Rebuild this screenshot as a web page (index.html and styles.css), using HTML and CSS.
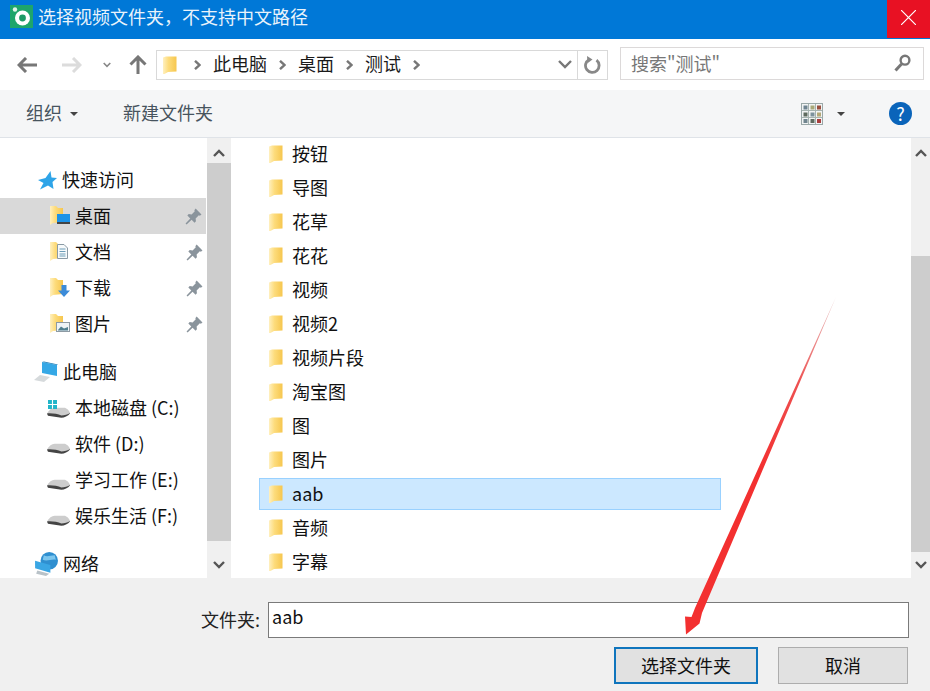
FILE: index.html
```html
<!DOCTYPE html>
<html lang="zh-CN">
<head>
<meta charset="utf-8">
<title>选择视频文件夹</title>
<link rel="stylesheet" href="styles.css">
</head>
<body>
<svg class="defs" width="0" height="0">
  <defs>
    <linearGradient id="fg" x1="0" y1="0" x2="1" y2="0">
      <stop offset="0" stop-color="#fff0c0"/>
      <stop offset=".4" stop-color="#fddc7c"/>
      <stop offset="1" stop-color="#f6c64e"/>
    </linearGradient>
    <linearGradient id="tail" gradientUnits="userSpaceOnUse" x1="836" y1="297" x2="760" y2="470">
      <stop offset="0" stop-color="#e8c8c8"/>
      <stop offset=".5" stop-color="#ee5050"/>
      <stop offset="1" stop-color="#f33030"/>
    </linearGradient>
    <symbol id="folder" viewBox="0 0 14 18">
      <path d="M0 1.500 3 .5H13.500V15.500L5 16 1.500 18H0Z" fill="url(#fg)"/>
    </symbol>
    <symbol id="sfolder" viewBox="0 0 14 20">
      <path d="M0 1H6L8 3H13V17L3 18 0 20Z" fill="url(#fg)"/>
    </symbol>
    <symbol id="pin" viewBox="0 0 16 16">
      <path d="M10 .5 15.500 6 14 7.200 13 6.800 10 9.800 10.300 12.500 9 13.800 6.200 11 1.500 15.500.5 14.500 5 9.800 2.200 7 3.500 5.700 6.200 6 9.200 3 8.800 2Z" fill="#8a949c"/>
    </symbol>
    <symbol id="drive" viewBox="0 0 24 11">
      <path d="M0 6.500C2 3 5 .5 8 .5H18C20 .5 23 3 24 6C22 8 18 10 15 10L1 8Z" fill="#cdcdcd"/>
      <path d="M0 6.500C5 6 11 7 15 8.500C18 8.500 22 7.500 24 6V6.500C22 9 18 11 15 11L1 9Z" fill="#444"/>
    </symbol>
  </defs>
</svg>

<header class="titlebar">
  <svg class="app-icon" viewBox="0 0 23 23"><rect width="23" height="23" fill="#1ea56b"/><circle cx="12.500" cy="13" r="7.500" fill="#fff"/><circle cx="12.500" cy="13" r="3.400" fill="#1d9a66"/><circle cx="5" cy="4.500" r="2.200" fill="#dff3e8"/></svg>
  <span class="title-text">选择视频文件夹，不支持中文路径</span>
  <button class="close" type="button"><svg viewBox="0 0 15 15" class="close-x"><path d="M0 0 15 15M15 0 0 15" stroke="#fff" stroke-width="1.200" fill="none"/></svg></button>
</header>

<nav class="navbar">
  <svg class="nav-back" viewBox="0 0 20 16"><path d="M20 8H2M9 1 2 8 9 15" fill="none" stroke="#777" stroke-width="3"/></svg>
  <svg class="nav-forward" viewBox="0 0 20 16"><path d="M0 8H18M11 1 18 8 11 15" fill="none" stroke="#dcdcdc" stroke-width="3"/></svg>
  <svg class="nav-recent" viewBox="0 0 8 6"><path d="M.7 1 4 4.300 7.300 1" fill="none" stroke="#888" stroke-width="1.600"/></svg>
  <svg class="nav-up" viewBox="0 0 18 19"><path d="M9 19V2M1.500 9.500 9 2 16.500 9.500" fill="none" stroke="#777" stroke-width="3"/></svg>
  <div class="address">
    <svg class="addr-folder"><use href="#folder"/></svg>
    <svg class="chev" viewBox="0 0 7 10"><path d="M1 .8 5.400 5 1 9.200" fill="none" stroke="#777" stroke-width="2.400"/></svg>
    <span class="crumb">此电脑</span>
    <svg class="chev" viewBox="0 0 7 10"><path d="M1 .8 5.400 5 1 9.200" fill="none" stroke="#777" stroke-width="2.400"/></svg>
    <span class="crumb">桌面</span>
    <svg class="chev" viewBox="0 0 7 10"><path d="M1 .8 5.400 5 1 9.200" fill="none" stroke="#777" stroke-width="2.400"/></svg>
    <span class="crumb">测试</span>
    <svg class="chev" viewBox="0 0 7 10"><path d="M1 .8 5.400 5 1 9.200" fill="none" stroke="#777" stroke-width="2.400"/></svg>
    <svg class="addr-down" viewBox="0 0 14 9"><path d="M1 1 7 7 13 1" fill="none" stroke="#777" stroke-width="2.400"/></svg>
    <div class="addr-refresh">
      <svg class="refresh" viewBox="0 0 17 18"><path d="M12.500 4.200A6.800 6.800 0 1 1 5 3.600" fill="none" stroke="#888" stroke-width="2.800"/><path d="M3 0 8.500 3.600 3.500 7.200Z" fill="#888"/></svg>
    </div>
  </div>
  <div class="search">
    <span class="search-text">搜索"测试"</span>
    <svg class="search-icon" viewBox="0 0 17 18"><circle cx="11" cy="6.200" r="4.400" fill="none" stroke="#777" stroke-width="2.400"/><path d="M7.500 10 1.500 16.500" stroke="#777" stroke-width="3" fill="none"/></svg>
  </div>
</nav>

<div class="toolbar">
  <span class="tool">组织</span>
  <span class="caret caret-org"></span>
  <span class="tool tool-new">新建文件夹</span>
  <svg class="view-icon" viewBox="0 0 22 22">
    <rect x=".5" y=".5" width="21" height="21" fill="#f2f4f4" stroke="#9aa8a8"/>
    <path d="M7.500 1V21M14.500 1V21M1 7.500H21M1 14.500H21" stroke="#a6b4b0"/>
    <rect x="2.500" y="2.500" width="4" height="4" fill="#6f8491"/><rect x="9.500" y="2.500" width="4" height="4" fill="#a8a878"/><rect x="16" y="2.500" width="4" height="4" fill="#99503f"/>
    <rect x="2.500" y="9.500" width="4" height="4" fill="#5e6a5e"/><rect x="9.500" y="9.500" width="4" height="4" fill="#7c919c"/><rect x="16" y="9.500" width="4" height="4" fill="#b4a878"/>
    <rect x="2.500" y="16" width="4" height="4" fill="#71858f"/><rect x="9.500" y="16" width="4" height="4" fill="#5e6a5e"/><rect x="16" y="16" width="4" height="4" fill="#a83e3e"/>
  </svg>
  <span class="caret caret-view"></span>
  <span class="help">?</span>
</div>

<main class="content">
  <aside class="sidebar">
    <div class="side-row side-top side-first">
      <svg class="star" viewBox="0 0 19 19"><path d="M12.500 0 13.500 6.500 19 7 14.500 11 15.500 18 10 14.500 2 18.500 5.500 12 0 9 7.500 7Z" fill="#2ea4e8"/></svg>
      <span class="label">快速访问</span>
    </div>
    <div class="side-row side-child selected">
      <span class="side-ico"><svg class="sf"><use href="#sfolder"/></svg><svg class="ov ov-desk" viewBox="0 0 13 10"><rect width="13" height="8" fill="#1c93e8"/><rect y="8" width="13" height="2" fill="#444"/></svg></span>
      <span class="label">桌面</span><svg class="pin"><use href="#pin"/></svg>
    </div>
    <div class="side-row side-child">
      <span class="side-ico"><svg class="sf"><use href="#sfolder"/></svg><svg class="ov ov-doc" viewBox="0 0 11 15"><path d="M.5.5H7L10.500 4V14.500H.5Z" fill="#f7fafb" stroke="#8a9aa5"/><path d="M2.500 5H8.500M2.500 7.500H8.500M2.500 10H8.500M2.500 12H8.500" stroke="#6d9db8"/></svg></span>
      <span class="label">文档</span><svg class="pin"><use href="#pin"/></svg>
    </div>
    <div class="side-row side-child">
      <span class="side-ico"><svg class="sf"><use href="#sfolder"/></svg><svg class="ov ov-down" viewBox="0 0 12 12"><path d="M3.500 0H8.500V5.500H12L6 12 0 5.500H3.500Z" fill="#3c8bd8"/></svg></span>
      <span class="label">下载</span><svg class="pin"><use href="#pin"/></svg>
    </div>
    <div class="side-row side-child side-last">
      <span class="side-ico"><svg class="sf"><use href="#sfolder"/></svg><svg class="ov ov-pic" viewBox="0 0 14 10"><rect x=".5" y=".5" width="13" height="9" fill="#eef3f6" stroke="#8d9aa3"/><path d="M2 8 5 4.500 8 6.500 12 5V8.500H2Z" fill="#4f7f8f"/></svg></span>
      <span class="label">图片</span><svg class="pin"><use href="#pin"/></svg>
    </div>
    <div class="side-row side-top">
      <svg class="pc" viewBox="0 0 24 22"><path d="M8 1 23 4V15L8 12Z" fill="#35a8e6"/><path d="M8 1 10 .5 24 3.500 23 4Z" fill="#1f7fb8"/><path d="M6 14 16 16 10 21 0 19Z" fill="#d6dadc"/></svg>
      <span class="label">此电脑</span>
    </div>
    <div class="side-row side-drive">
      <span class="drive-ico"><svg class="dr"><use href="#drive"/></svg><svg class="win" viewBox="0 0 8 8"><path d="M0 0H3.500V3.500H0ZM4.500 0H8V3.500H4.500ZM0 4.500H3.500V8H0ZM4.500 4.500H8V8H4.500Z" fill="#21b5c9"/></svg></span>
      <span class="label">本地磁盘 (C:)</span>
    </div>
    <div class="side-row side-drive"><span class="drive-ico"><svg class="dr"><use href="#drive"/></svg></span><span class="label">软件 (D:)</span></div>
    <div class="side-row side-drive"><span class="drive-ico"><svg class="dr"><use href="#drive"/></svg></span><span class="label">学习工作 (E:)</span></div>
    <div class="side-row side-drive side-last"><span class="drive-ico"><svg class="dr"><use href="#drive"/></svg></span><span class="label">娱乐生活 (F:)</span></div>
    <div class="side-row side-top">
      <svg class="net" viewBox="0 0 22 22"><circle cx="14" cy="8" r="8" fill="#2f8fd0"/><path d="M9 3C12 5 15 3 19 3L20 7C16 6 12 9 8 7Z" fill="#7cc6ee"/><path d="M1 8 15 12V19L1 15Z" fill="#3aa6e4"/><path d="M3 17 14 20 11 22 2 20Z" fill="#b9c2c8"/></svg>
      <span class="label">网络</span>
    </div>
  </aside>
  <div class="scroll scroll-left">
    <div class="sb-btn sb-up"><svg class="sb-chev" viewBox="0 0 12 8"><path d="M1 7 6 2 11 7" fill="none" stroke="#555" stroke-width="2.400"/></svg></div>
    <div class="sb-thumb"></div>
    <div class="sb-btn sb-down"><svg class="sb-chev" viewBox="0 0 12 8"><path d="M1 1 6 6 11 1" fill="none" stroke="#555" stroke-width="2.400"/></svg></div>
  </div>
  <section class="files">
    <div class="file"><svg class="ficon"><use href="#folder"/></svg><span class="label">按钮</span></div>
    <div class="file"><svg class="ficon"><use href="#folder"/></svg><span class="label">导图</span></div>
    <div class="file"><svg class="ficon"><use href="#folder"/></svg><span class="label">花草</span></div>
    <div class="file"><svg class="ficon"><use href="#folder"/></svg><span class="label">花花</span></div>
    <div class="file"><svg class="ficon"><use href="#folder"/></svg><span class="label">视频</span></div>
    <div class="file"><svg class="ficon"><use href="#folder"/></svg><span class="label">视频2</span></div>
    <div class="file"><svg class="ficon"><use href="#folder"/></svg><span class="label">视频片段</span></div>
    <div class="file"><svg class="ficon"><use href="#folder"/></svg><span class="label">淘宝图</span></div>
    <div class="file"><svg class="ficon"><use href="#folder"/></svg><span class="label">图</span></div>
    <div class="file"><svg class="ficon"><use href="#folder"/></svg><span class="label">图片</span></div>
    <div class="file file-selected"><svg class="ficon"><use href="#folder"/></svg><span class="label">aab</span></div>
    <div class="file"><svg class="ficon"><use href="#folder"/></svg><span class="label">音频</span></div>
    <div class="file"><svg class="ficon"><use href="#folder"/></svg><span class="label">字幕</span></div>
  </section>
  <div class="scroll scroll-right">
    <div class="sb-btn sb-track-top"><svg class="sb-chev" viewBox="0 0 12 8"><path d="M1 7 6 2 11 7" fill="none" stroke="#555" stroke-width="2.400"/></svg></div>
    <div class="sb-thumb"></div>
    <div class="sb-btn sb-down-r"><svg class="sb-chev" viewBox="0 0 12 8"><path d="M1 1 6 6 11 1" fill="none" stroke="#555" stroke-width="2.400"/></svg></div>
  </div>
</main>

<footer class="footer">
  <div class="field">
    <label class="field-label">文件夹:</label>
    <div class="field-input">aab</div>
  </div>
  <div class="actions">
    <button class="btn btn-primary" type="button">选择文件夹</button>
    <button class="btn btn-cancel" type="button">取消</button>
  </div>
</footer>

<svg class="arrow" viewBox="0 0 930 691">
  <path d="M836 297 702 613 699.500 623.500 686 634.500 685 616.500 691.500 617 695 608Z" fill="url(#tail)"/>
</svg>
</body>
</html>
```

FILE: styles.css
```css
* { box-sizing: border-box; }

html, body { margin: 0; padding: 0; }

body {
  position: relative;
  width: 930px;
  height: 691px;
  overflow: hidden;
  display: flex;
  flex-direction: column;
  background: #fff;
  color: #1a1a1a;
  font-family: "Noto Sans CJK SC", "Noto Sans", sans-serif;
  font-size: 18px;
  line-height: 24px;
}

svg { display: block; flex: none; }
.defs { position: absolute; }

/* title bar */
.titlebar {
  flex: none;
  height: 39px;
  display: flex;
  align-items: flex-start;
  padding-left: 10px;
  background: #0078d7;
  color: #e9f3fb;
}
.app-icon { width: 23px; height: 23px; margin-top: 5px; }
.title-text { margin: 4px 0 0 5px; }
.close {
  margin-left: auto;
  width: 43px;
  height: 38px;
  padding: 0;
  border: 0;
  background: #e81123;
  display: flex;
  align-items: center;
  justify-content: center;
}
.close-x { width: 15px; height: 15px; margin-top: -3px; }

/* navigation */
.navbar {
  flex: none;
  height: 51px;
  display: flex;
  align-items: center;
  padding-left: 17px;
  background: #fff;
}
.nav-back { width: 20px; height: 16px; }
.nav-forward { width: 20px; height: 16px; margin-left: 25px; }
.nav-recent { width: 8px; height: 6px; margin-left: 21px; }
.nav-up { width: 18px; height: 19px; margin-left: 18px; }

.address {
  width: 452px;
  height: 30px;
  margin-left: 9px;
  padding-left: 6px;
  display: flex;
  align-items: center;
  gap: 12px;
  border: 1px solid #d9d9d9;
  color: #1a1a1a;
}
.addr-folder { width: 14px; height: 20px; margin-right: 5px; }
.crumb { margin-bottom: 3px; }
.chev { width: 7px; height: 10px; }
.addr-down { width: 14px; height: 9px; margin-left: auto; margin-right: -7px; }
.addr-refresh {
  width: 30px;
  height: 100%;
  display: flex;
  align-items: center;
  justify-content: center;
  border-left: 1px solid #d9d9d9;
}
.refresh { width: 17px; height: 18px; }

.search {
  width: 304px;
  height: 33px;
  margin-left: 12px;
  margin-top: -3px;
  padding: 0 12px 0 10px;
  display: flex;
  align-items: center;
  justify-content: space-between;
  border: 1px solid #dcd9d9;
  color: #777;
}
.search-icon { width: 17px; height: 18px; }

/* toolbar */
.toolbar {
  flex: none;
  height: 48px;
  display: flex;
  align-items: center;
  padding-left: 26px;
  background: #f5f6f7;
  border-bottom: 1px solid #dfe3e8;
  color: #47545e;
}
.tool { margin-bottom: 4px; }
.caret {
  width: 0;
  height: 0;
  border-left: 4px solid transparent;
  border-right: 4px solid transparent;
  border-top: 4px solid #444;
}
.caret-org { margin-left: 8px; }
.tool-new { margin-left: 45px; }
.view-icon { width: 22px; height: 22px; margin-left: auto; }
.caret-view { margin-left: 14px; }
.help {
  width: 23px;
  height: 23px;
  margin: 0 18px 0 44px;
  border-radius: 50%;
  background: #0a64ba;
  color: #fff;
  font-size: 18px;
  line-height: 23px;
  text-align: center;
}

/* content */
.content {
  flex: 1;
  min-height: 0;
  display: flex;
  background: #fff;
}

.sidebar {
  width: 207px;
  overflow: hidden;
  display: flex;
  flex-direction: column;
  color: #111;
}
.side-row {
  flex: none;
  height: 36px;
  display: flex;
  align-items: center;
}
.label { margin-bottom: 2px; }
.side-first { margin-top: 24px; }
.side-last { margin-bottom: 12px; }
.side-top { padding-left: 34px; }
.side-child { padding: 0 4px 0 50px; }
.selected { background: #d9d9d9; margin-right: 1px; }
.side-drive { padding-left: 47px; }

.star { width: 19px; height: 19px; margin: 0 6px 0 4px; }
.side-first .label { margin-left: -1px; }
.pc { width: 24px; height: 22px; margin-right: 5px; }
.net { width: 24px; height: 24px; margin-right: 5px; }

.side-ico {
  position: relative;
  width: 25px;
  height: 22px;
  flex: none;
}
.sf { width: 14px; height: 20px; }
.ov { position: absolute; }
.ov-desk { left: 7px; top: 9px; width: 13px; height: 10px; }
.ov-doc { left: 7px; top: 3px; width: 11px; height: 15px; }
.ov-down { left: 8px; top: 8px; width: 12px; height: 12px; }
.ov-pic { left: 6px; top: 9px; width: 14px; height: 10px; }
.pin { width: 17px; height: 17px; margin-left: auto; }

.drive-ico {
  position: relative;
  width: 28px;
  height: 22px;
  flex: none;
}
.dr { position: absolute; left: 0; top: 10px; width: 23px; height: 11px; }
.win { position: absolute; left: 1px; top: 3px; width: 9px; height: 9px; }

/* scrollbars */
.scroll {
  flex: none;
  display: flex;
  flex-direction: column;
  background: #f0f0f0;
}
.scroll-left { width: 24px; }
.scroll-right { width: 19px; }
.sb-btn {
  flex: none;
  display: flex;
  justify-content: center;
  padding-top: 11px;
}
.sb-chev { width: 12px; height: 8px; }
.sb-up { height: 25px; }
.sb-down { height: 37px; padding-top: 20px; }
.sb-track-top { height: 118px; }
.sb-down-r { height: 26px; padding-top: 9px; }
.sb-thumb { flex: 1; background: #cdcdcd; }

/* file list */
.files {
  flex: 1;
  min-width: 0;
  overflow: hidden;
  display: flex;
  flex-direction: column;
  gap: 2px;
  padding-left: 28px;
}
.file {
  flex: none;
  width: 462px;
  height: 32px;
  display: flex;
  align-items: center;
  gap: 9px;
  padding-left: 10px;
  border: 1px solid transparent;
  color: #111;
}
.file-selected { background: #cce8ff; border-color: #99d1ff; }
.ficon { width: 14px; height: 18px; margin-left: -1px; }

/* footer */
.footer {
  flex: none;
  height: 113px;
  padding: 24px 21px 0 0;
  display: flex;
  flex-direction: column;
  align-items: flex-end;
  gap: 9px;
  background: #f0f0f0;
}
.field { display: flex; align-items: center; gap: 8px; }
.field-label { color: #222; margin-bottom: 2px; }
.field-input {
  width: 641px;
  height: 36px;
  padding-left: 3px;
  border: 1px solid #7a7a7a;
  background: #fff;
  color: #111;
  line-height: 27px;
}
.actions { display: flex; gap: 20px; margin-right: 1px; }
.btn {
  height: 37px;
  padding: 0 0 2px;
  font: inherit;
  color: #111;
  background: #e1e1e1;
  border: 1px solid #adadad;
}
.btn-primary { width: 144px; border: 2px solid #0f75bd; }
.btn-cancel { width: 130px; }

/* annotation */
.arrow {
  position: absolute;
  left: 0;
  top: 0;
  width: 930px;
  height: 691px;
  pointer-events: none;
}
```
